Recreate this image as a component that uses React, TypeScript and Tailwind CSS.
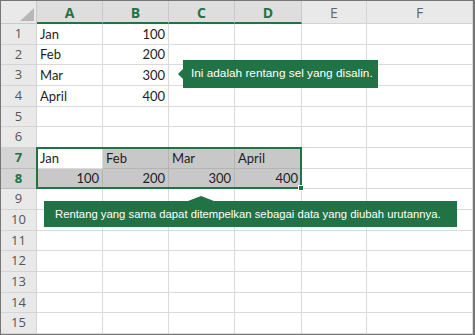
import React from "react";

const cols = ["A", "B", "C", "D", "E", "F"];

type Cell = { text?: string; right?: boolean };

const data: Record<number, Cell[]> = {
  1: [{ text: "Jan" }, { text: "100", right: true }],
  2: [{ text: "Feb" }, { text: "200", right: true }],
  3: [{ text: "Mar" }, { text: "300", right: true }],
  4: [{ text: "April" }, { text: "400", right: true }],
  7: [{ text: "Jan" }, { text: "Feb" }, { text: "Mar" }, { text: "April" }],
  8: [
    { text: "100", right: true },
    { text: "200", right: true },
    { text: "300", right: true },
    { text: "400", right: true },
  ],
};

const rows = Array.from({ length: 15 }, (_, i) => i + 1);

const isShaded = (r: number, c: number) =>
  (r === 7 && c >= 1 && c <= 3) || (r === 8 && c <= 3);

const App: React.FC = () => {
  return (
    <div className="w-[475px] h-[335px] bg-white border border-r-[2px] border-[#767676] relative overflow-hidden">
      <div
        className="relative grid h-full grid-cols-[36px_66px_66px_66px_67px_65px_1fr] grid-rows-[23px_repeat(15,minmax(0,1fr))]"
        style={{ fontFamily: "Lato, 'Liberation Sans', sans-serif" }}
      >
        {/* corner */}
        <div className="relative bg-[#e9e9e9] border-r border-b border-[#c9c9c9]">
          <svg className="absolute right-[2px] bottom-[2px]" width="14" height="13" viewBox="0 0 14 13">
            <polygon points="14,0 14,13 0,13" fill="#b7b7b7" />
          </svg>
        </div>
        {cols.map((c, i) => {
          const sel = i <= 3;
          return (
            <div
              key={c}
              className={
                sel
                  ? "flex items-center justify-center bg-[#dedede] border-r border-[#c9c9c9] border-b-2 border-b-[#217346] text-[#217346] font-bold text-[14px] pt-[1px]"
                  : "flex items-center justify-center bg-[#e9e9e9] border-r border-b border-[#d4d4d4] text-[#666666] text-[14px] pt-[1px]"
              }
              style={{ fontFamily: "'Open Sans', 'Noto Sans', sans-serif" }}
            >
              {c}
            </div>
          );
        })}
        {rows.map((r) => {
          const rsel = r === 7 || r === 8;
          return (
            <React.Fragment key={r}>
              <div
                className={
                  rsel
                    ? "flex items-center justify-center bg-[#d4d4d4] border-r border-b border-[#bdbdbd] text-[#217346] font-bold text-[13px]"
                    : "flex items-center justify-center bg-[#e9e9e9] border-r border-b border-[#d4d4d4] text-[#555555] text-[13px]"
                }
                style={{ fontFamily: "'Open Sans', 'Noto Sans', sans-serif" }}
              >
                {r}
              </div>
              {cols.map((c, ci) => {
                const cell = data[r]?.[ci];
                const shaded = isShaded(r, ci);
                return (
                  <div
                    key={c}
                    className={
                      (shaded
                        ? "bg-[#c8c8c8] border-[#b4b4b4] "
                        : "bg-white border-[#dadada] ") +
                      "flex items-end border-r border-b px-[3px] pb-[1px] text-[13px] text-[#1e1e1e] leading-[18px] " +
                      (cell?.right ? "justify-end" : "justify-start")
                    }
                  >
                    {cell?.text}
                  </div>
                );
              })}
            </React.Fragment>
          );
        })}

        {/* selection border around A7:D8 */}
        <div className="absolute col-start-2 col-end-6 row-start-8 row-end-10 -top-[1px] -left-[1px] -right-0 -bottom-0 border-2 border-[#217346] pointer-events-none">
          <div className="absolute -right-[4px] -bottom-[4px] w-[6px] h-[6px] bg-[#217346] border border-white" />
        </div>
      </div>

      {/* callout 1 */}
      <div
        className="absolute left-[182px] top-[59px] w-[195px] h-[28px] bg-[#217346] text-white text-[11.8px] whitespace-nowrap flex items-center pl-[8px]"
        style={{ fontFamily: "'Liberation Sans', Arial, sans-serif" }}
      >
        <svg className="absolute -left-[5px] top-[9px]" width="5" height="10" viewBox="0 0 5 10">
          <polygon points="5,0 0,5 5,10" fill="#217346" />
        </svg>
        Ini adalah rentang sel yang disalin.
      </div>

      {/* callout 2 */}
      <div
        className="absolute left-[43px] top-[200px] w-[413px] h-[26px] bg-[#217346] text-white text-[11.3px] whitespace-nowrap flex items-center pl-[11px]"
        style={{ fontFamily: "'Liberation Sans', Arial, sans-serif" }}
      >
        <svg className="absolute left-[144px] -top-[5px]" width="26" height="5" viewBox="0 0 26 5">
          <polygon points="0,5 13,0 26,5" fill="#217346" />
        </svg>
        Rentang yang sama dapat ditempelkan sebagai data yang diubah urutannya.
      </div>
    </div>
  );
};

export default App;
